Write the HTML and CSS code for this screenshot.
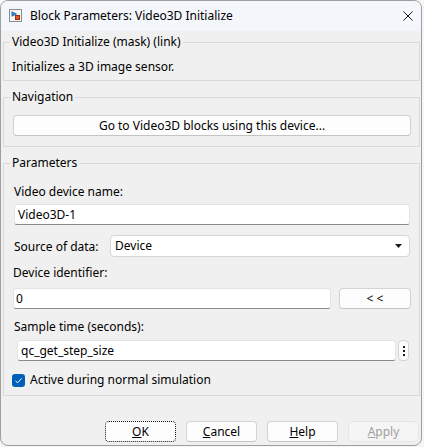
FILE: index.html
```html
<!DOCTYPE html>
<html>
<head>
<meta charset="utf-8">
<title>Block Parameters: Video3D Initialize</title>
<link rel="stylesheet" href="styles.css">
</head>
<body>
<div class="window">
  <div class="titlebar">
    <svg class="app-icon" viewBox="0 0 13 13" width="13" height="13">
      <rect x="0.5" y="0.5" width="12" height="12" fill="#fafafa" stroke="#8c8c8c"/>
      <path d="M3 2.5 V7.5" stroke="#1f6fc0" stroke-width="1"/>
      <path d="M3.5 3 L7.5 5 L3.5 7 Z" fill="#2b86d9" stroke="#1f6fc0" stroke-width="0.8"/>
      <rect x="6.5" y="6.5" width="4" height="4" fill="#e5531f" stroke="#9e2e0c"/>
    </svg>
    <span class="title">Block Parameters: Video3D Initialize</span>
    <svg class="close" viewBox="0 0 10 10" width="10" height="10">
      <path d="M0.5 0.5 L9.5 9.5 M9.5 0.5 L0.5 9.5" stroke="#1b1b1b" stroke-width="1"/>
    </svg>
  </div>
  <div class="content">
    <fieldset class="group g-desc">
      <legend>Video3D Initialize (mask) (link)</legend>
      <div class="desc">Initializes a 3D image sensor.</div>
    </fieldset>
    <fieldset class="group g-nav">
      <legend>Navigation</legend>
      <button class="btn wide" type="button">Go to Video3D blocks using this device...</button>
    </fieldset>
    <fieldset class="group g-params">
      <legend>Parameters</legend>
      <div class="label l-name">Video device name:</div>
      <div class="edit e-name">Video3D-1</div>
      <div class="row r-source">
        <span class="label">Source of data:</span>
        <div class="combo">
          <span>Device</span>
          <svg class="arrow" viewBox="0 0 7 4" width="7" height="4"><path d="M0 0 H7 L3.5 4 Z" fill="#1b1b1b"/></svg>
        </div>
      </div>
      <div class="label l-id">Device identifier:</div>
      <div class="row r-id">
        <div class="edit e-id">0</div>
        <button class="btn back" type="button">&lt; &lt;</button>
      </div>
      <div class="label l-sample">Sample time (seconds):</div>
      <div class="row r-sample">
        <div class="edit e-sample">qc_get_step_size</div>
        <button class="kebab" type="button" aria-label="More">
          <svg viewBox="0 0 2 10" width="2" height="10"><rect x="0" y="0" width="2" height="2" fill="#1b1b1b"/><rect x="0" y="4" width="2" height="2" fill="#1b1b1b"/><rect x="0" y="8" width="2" height="2" fill="#1b1b1b"/></svg>
        </button>
      </div>
      <label class="check">
        <span class="box"><svg viewBox="0 0 13 13" width="13" height="13"><path d="M3.5 6.8 L5.6 8.8 L9.6 4.4" fill="none" stroke="#fff" stroke-width="1"/></svg></span>
        <span>Active during normal simulation</span>
      </label>
    </fieldset>
    <div class="actions">
      <button class="btn act focus" type="button"><u>O</u>K</button>
      <button class="btn act" type="button"><u>C</u>ancel</button>
      <button class="btn act" type="button"><u>H</u>elp</button>
      <button class="btn act disabled" type="button"><u>A</u>pply</button>
    </div>
  </div>
</div>
</body>
</html>
```

FILE: styles.css
```css
* { box-sizing: border-box; }
html, body { margin: 0; padding: 0; }
body {
  background: #f6f6f6;
  font-family: "Noto Sans", "Liberation Sans", sans-serif;
  font-size: 12px;
  line-height: 16px;
  color: #000;
}
.window {
  width: 422px;
  height: 446px;
  border: 1px solid #9e9e9e;
  border-radius: 8px;
  background: #f0f0f0;
  overflow: hidden;
  display: flex;
  flex-direction: column;
}
.titlebar {
  flex: none;
  height: 30px;
  background: #f3f6fb;
  display: flex;
  align-items: center;
  padding-left: 8px;
}
.app-icon { flex: none; margin-right: 8px; margin-top: -2px; }
.title { flex: 1; }
.close { flex: none; margin-right: 8px; margin-top: -1px; }

.content {
  flex: 1;
  display: flex;
  flex-direction: column;
  padding: 3px 1px 3px 2px;
}
fieldset.group {
  margin: 0;
  min-width: 0;
  border: 1px solid #dadada;
  padding: 9px 8px 5px 9px;
}
fieldset.group legend {
  padding: 0 2px;
  margin-left: -3px;
  line-height: 16px;
}
fieldset.g-nav { margin-top: 8px; padding-top: 10px; padding-bottom: 10px; }
fieldset.g-params { margin-top: 8px; padding-top: 13px; padding-bottom: 7px; }
.desc { margin-left: -1px; }

.btn {
  font: inherit;
  color: #000;
  background: #fdfdfd;
  border: 1px solid #d3d3d3;
  border-bottom-color: #c4c4c4;
  border-radius: 4px;
  height: 21px;
  padding: 0;
  line-height: 19px;
  text-align: center;
}
.wide { display: block; width: 100%; }

.label { line-height: 16px; }
.l-name { margin-left: 1px; }
.edit {
  height: 21px;
  background: #fff;
  border: 1px solid #e4e4e4;
  border-bottom-color: #8a8a8a;
  border-radius: 3px;
  padding: 0 3px;
  line-height: 19px;
}
.e-name { margin: 4px 1px 0 1px; }
.row { display: flex; align-items: center; }
.r-source { margin-top: 10px; margin-left: 1px; }
.r-source .label { margin-top: 2px; }
.combo {
  margin-left: auto;
  margin-right: 1px;
  width: 300px;
  height: 22px;
  background: #fff;
  border: 1px solid #d6d6d6;
  border-radius: 4px;
  display: flex;
  align-items: center;
  justify-content: space-between;
  padding: 0 7px 0 4px;
}
.arrow { flex: none; }
.l-id { margin-top: 8px; }
.r-id { margin-top: 7px; justify-content: space-between; }
.e-id { width: 318px; padding-left: 2px; }
.back { width: 72px; }
.l-sample { margin-top: 10px; margin-left: 1px; }
.r-sample { margin-top: 5px; }
.e-sample { width: 379px; margin-left: 4px; }
.kebab {
  margin-left: 2px;
  width: 11px;
  height: 21px;
  padding: 0;
  background: #fbfbfb;
  border: 1px solid #d3d3d3;
  border-radius: 4px;
  display: flex;
  align-items: center;
  justify-content: center;
}
.check {
  display: flex;
  align-items: center;
  margin-top: 11px;
  margin-left: -1px;
}
.box {
  width: 13px;
  height: 13px;
  background: #005fb8;
  border-radius: 3px;
  margin-right: 5px;
  display: flex;
}
.actions {
  margin-top: 25px;
  display: flex;
  justify-content: flex-end;
  gap: 10px;
  padding-right: 1px;
}
.act { width: 71px; }
.focus { border: 1px dotted #111; }
.disabled {
  background: #f5f5f5;
  border-color: #e5e5e5;
  color: #a0a0a0;
}
```
